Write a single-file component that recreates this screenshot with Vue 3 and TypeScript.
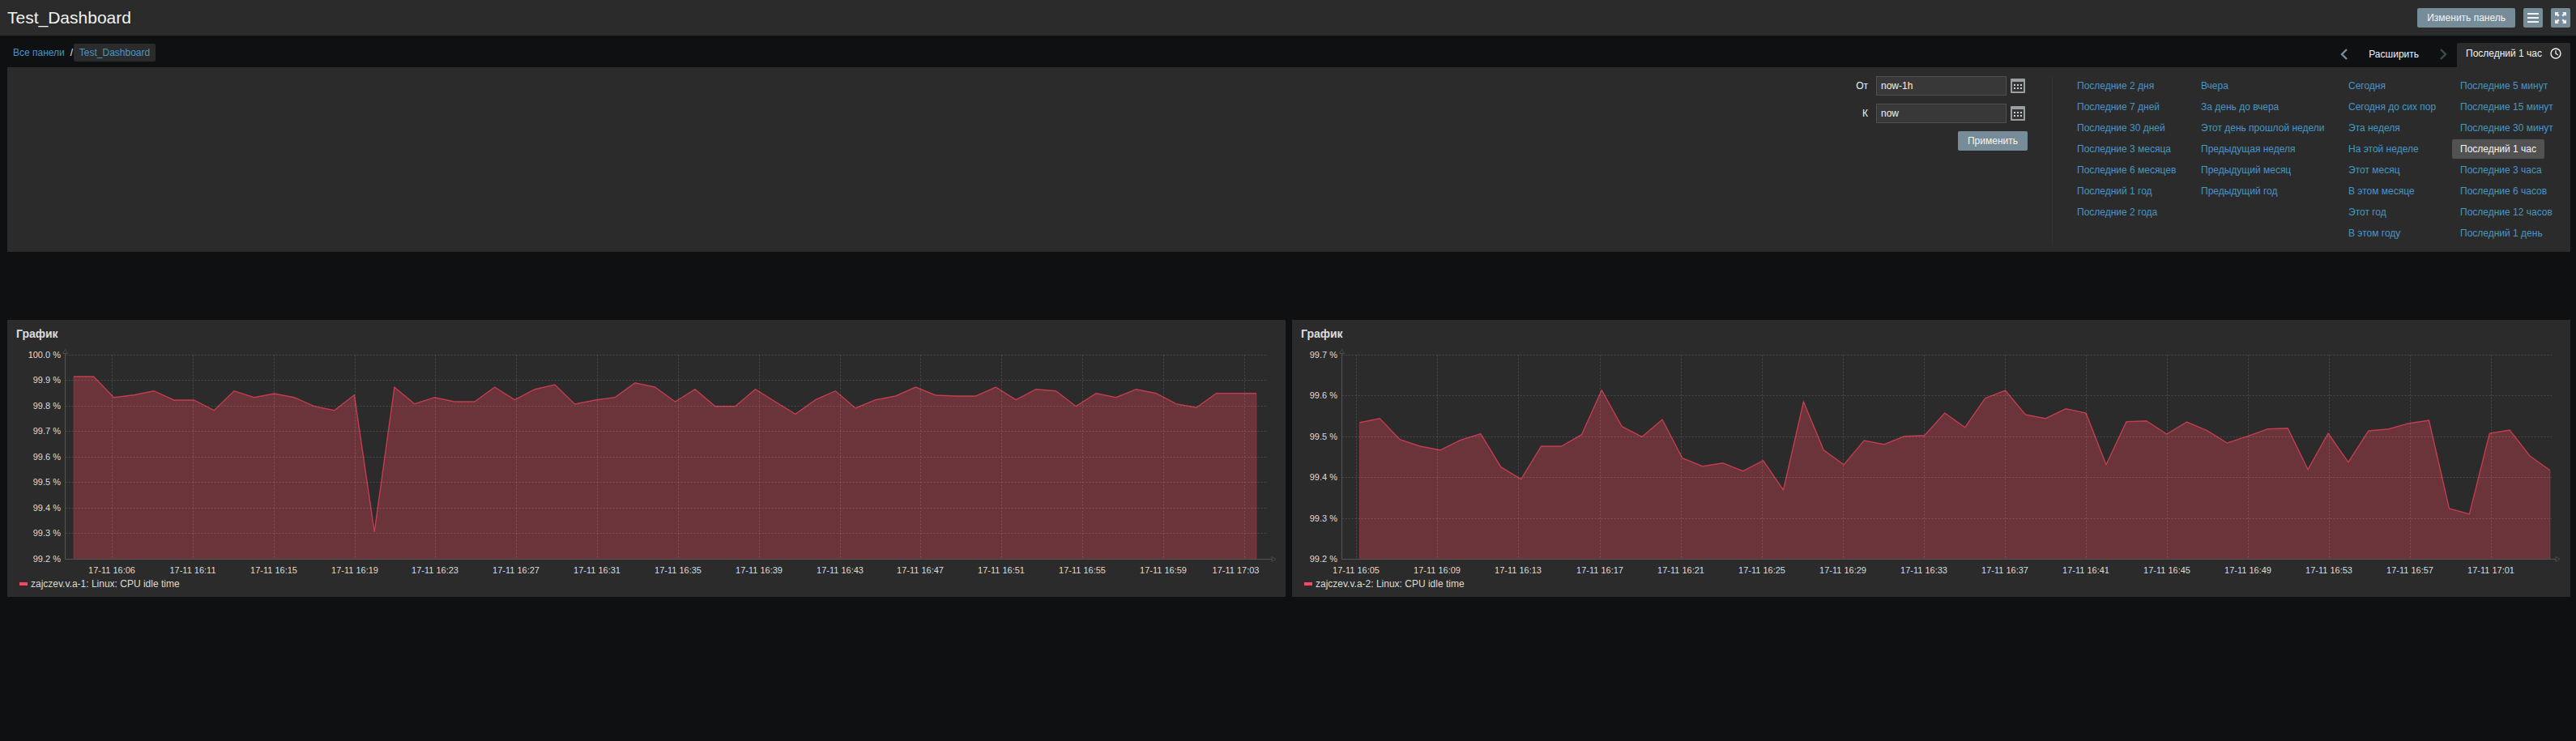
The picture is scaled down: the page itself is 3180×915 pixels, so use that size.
<script setup lang="ts">
interface Tick {
  x: number;
  label: string;
  labelX?: number;
}

interface Chart {
  left: number;
  axisX: number;
  gridEnd: number;
  firstX: number;
  lastX: number;
  legend: string;
  yLabels: string[];
  ticks: Tick[];
  values: number[];
}

const plotTop = 438.5;
const plotBottom = 690.5;
const svgTop = 428;
const svgHeight = 284;
const panelWidth = 1578;

function makeTicks(xs: number[], labels: string[]): Tick[] {
  return xs.map((x, index) => ({ x, label: `17-11 ${labels[index]}` }));
}

const charts: Chart[] = [
  {
    left: 9,
    axisX: 80.5,
    gridEnd: 1565,
    firstX: 91,
    lastX: 1551,
    legend: 'zajczev.v.a-1: Linux: CPU idle time',
    yLabels: ['100.0 %', '99.9 %', '99.8 %', '99.7 %', '99.6 %', '99.5 %', '99.4 %', '99.3 %', '99.2 %'],
    ticks: makeTicks(
      [138.5, 238.5, 338.5, 438.5, 537.5, 637.5, 737.5, 837.5, 937.5, 1037.5, 1136.5, 1236.5, 1336.5, 1436.5, 1536.5],
      ['16:06', '16:11', '16:15', '16:19', '16:23', '16:27', '16:31', '16:35', '16:39', '16:43', '16:47', '16:51', '16:55', '16:59', '17:03'],
    ).map((tick) => (tick.label.endsWith('17:03') ? { ...tick, labelX: 1526 } : tick)),
    values: [
      465, 465, 490.7, 487.7, 482.7, 494, 494, 506.7, 482.7, 490.7,
      486, 490.7, 501.7, 506.7, 487.7, 656.7, 478, 498.7, 490.7, 496,
      496, 478, 493.7, 480.7, 475, 499, 494, 490.7, 472.7, 478,
      496, 480.7, 501.7, 501.7, 480.7, 496, 511.3, 493.7, 482.7, 504,
      493.7, 489, 478, 488, 489, 489, 478, 493.7, 480.7, 482.7,
      501.7, 485.7, 490.7, 480.7, 485.7, 498.7, 503.3, 485.7, 485.7, 485.7,
    ],
  },
  {
    left: 1595,
    axisX: 1656.5,
    gridEnd: 3150,
    firstX: 1678.4,
    lastX: 3148,
    legend: 'zajczev.v.a-2: Linux: CPU idle time',
    yLabels: ['99.7 %', '99.6 %', '99.5 %', '99.4 %', '99.3 %', '99.2 %'],
    ticks: makeTicks(
      [1674.5, 1774.5, 1874.5, 1975.5, 2075.5, 2175.5, 2275.5, 2375.5, 2475.5, 2575.5, 2675.5, 2775.5, 2875.5, 2975.5, 3075.5],
      ['16:05', '16:09', '16:13', '16:17', '16:21', '16:25', '16:29', '16:33', '16:37', '16:41', '16:45', '16:49', '16:53', '16:57', '17:01'],
    ),
    values: [
      521.7, 516.7, 542.7, 551, 555.7, 543.3, 535.7, 576.7, 591.7, 551,
      551, 536.7, 481.7, 526.7, 539.3, 518, 565.7, 575.7, 571.7, 581.7,
      568.7, 605, 496, 555.7, 573.7, 544, 548.7, 538.7, 537.7, 510,
      527.7, 491.7, 482, 512, 516.7, 504.7, 510, 573.7, 520.7, 519.7,
      536, 521, 531.7, 547, 538.7, 529.7, 528.7, 579.7, 535, 570.7,
      532, 529.7, 522.7, 519, 628, 634.7, 535, 531, 563, 580.7,
    ],
  },
];

function localX(chart: Chart, x: number): number {
  return x - chart.left;
}

function localY(y: number): number {
  return y - svgTop;
}

// snapped to a pixel row so the dashed lines stay crisp
function gridY(chart: Chart, index: number): number {
  const step = (plotBottom - plotTop) / (chart.yLabels.length - 1);
  return localY(Math.round(plotTop - 0.5 + step * index - 0.1) + 0.5);
}

function linePoints(chart: Chart): string {
  const step = (chart.lastX - chart.firstX) / (chart.values.length - 1);
  return chart.values
    .map((value, index) => `${localX(chart, chart.firstX + step * index).toFixed(1)},${localY(value)}`)
    .join(' ');
}

function areaPoints(chart: Chart): string {
  const bottom = localY(plotBottom);
  return `${localX(chart, chart.firstX)},${bottom} ${linePoints(chart)} ${localX(chart, chart.lastX)},${bottom}`;
}

const rangeColumns = [
  {
    width: 153,
    items: ['Последние 2 дня', 'Последние 7 дней', 'Последние 30 дней', 'Последние 3 месяца', 'Последние 6 месяцев', 'Последний 1 год', 'Последние 2 года'],
  },
  {
    width: 182,
    items: ['Вчера', 'За день до вчера', 'Этот день прошлой недели', 'Предыдущая неделя', 'Предыдущий месяц', 'Предыдущий год'],
  },
  {
    width: 138,
    items: ['Сегодня', 'Сегодня до сих пор', 'Эта неделя', 'На этой неделе', 'Этот месяц', 'В этом месяце', 'Этот год', 'В этом году'],
  },
  {
    width: 146,
    items: ['Последние 5 минут', 'Последние 15 минут', 'Последние 30 минут', 'Последний 1 час', 'Последние 3 часа', 'Последние 6 часов', 'Последние 12 часов', 'Последний 1 день'],
  },
];

const activeRange = 'Последний 1 час';
</script>

<template>
  <div class="page">
    <header class="header">
      <h1 class="title">Test_Dashboard</h1>
      <div class="header-actions">
        <button class="btn">Изменить панель</button>
        <button class="btn btn-icon" aria-label="menu">
          <svg width="14" height="12" viewBox="0 0 14 12">
            <rect x="0" y="0" width="14" height="2" fill="#f2f2f2" />
            <rect x="0" y="5" width="14" height="2" fill="#f2f2f2" />
            <rect x="0" y="10" width="14" height="2" fill="#f2f2f2" />
          </svg>
        </button>
        <button class="btn btn-icon btn-full" aria-label="fullscreen">
          <svg width="14" height="14" viewBox="0 0 14 14" fill="#f2f2f2">
            <path d="M0 0h5L3.4 1.6 5.6 3.8 3.8 5.6 1.6 3.4 0 5z" />
            <path d="M14 0v5l-1.6-1.6-2.2 2.2-1.8-1.8 2.2-2.2L9 0z" />
            <path d="M0 14V9l1.6 1.6 2.2-2.2 1.8 1.8-2.2 2.2L5 14z" />
            <path d="M14 14H9l1.6-1.6-2.2-2.2 1.8-1.8 2.2 2.2L14 9z" />
          </svg>
        </button>
      </div>
    </header>

    <div class="toolbar">
      <nav class="crumbs">
        <a class="crumb">Все панели</a>
        <span class="crumb-sep">/</span>
        <a class="crumb crumb-current">Test_Dashboard</a>
      </nav>
      <div class="time-nav">
        <svg class="chevron" width="24" height="16" viewBox="0 0 24 16">
          <path d="M15 2 9 8l6 6" fill="none" stroke="#768d99" stroke-width="2.4" />
        </svg>
        <span class="zoom-out">Расширить</span>
        <svg class="chevron" width="24" height="16" viewBox="0 0 24 16">
          <path d="M9 2l6 6-6 6" fill="none" stroke="#3f4c54" stroke-width="2.4" />
        </svg>
        <div class="time-tab">
          <span>Последний 1 час</span>
          <svg width="14" height="14" viewBox="0 0 14 14">
            <circle cx="7" cy="7" r="6" fill="none" stroke="#f2f2f2" stroke-width="1.4" />
            <path d="M7 3.2V7l2.8 2" fill="none" stroke="#f2f2f2" stroke-width="1.3" />
          </svg>
        </div>
      </div>
    </div>

    <section class="filter">
      <form class="range-form" @submit.prevent>
        <label class="field-label">От</label>
        <input class="field" value="now-1h" readonly />
        <svg class="calendar" width="18" height="18" viewBox="0 0 18 18">
          <rect width="18" height="18" rx="1" fill="#98a0a3" />
          <rect x="2" y="4" width="14" height="12" fill="#353535" />
          <g fill="#d0d3d4">
            <rect x="4" y="7" width="2" height="2" /><rect x="8" y="7" width="2" height="2" /><rect x="12" y="7" width="2" height="2" />
            <rect x="4" y="11" width="2" height="2" /><rect x="8" y="11" width="2" height="2" /><rect x="12" y="11" width="2" height="2" />
          </g>
        </svg>
        <label class="field-label">К</label>
        <input class="field" value="now" readonly />
        <svg class="calendar" width="18" height="18" viewBox="0 0 18 18">
          <rect width="18" height="18" rx="1" fill="#98a0a3" />
          <rect x="2" y="4" width="14" height="12" fill="#353535" />
          <g fill="#d0d3d4">
            <rect x="4" y="7" width="2" height="2" /><rect x="8" y="7" width="2" height="2" /><rect x="12" y="7" width="2" height="2" />
            <rect x="4" y="11" width="2" height="2" /><rect x="8" y="11" width="2" height="2" /><rect x="12" y="11" width="2" height="2" />
          </g>
        </svg>
        <button class="btn btn-apply">Применить</button>
      </form>
      <div class="ranges">
        <ul
          v-for="column in rangeColumns"
          :key="column.items[0]"
          class="range-col"
          :style="{ width: `${column.width}px` }"
        >
          <li v-for="item in column.items" :key="item">
            <a class="range-link" :class="{ 'range-active': item === activeRange }">{{ item }}</a>
          </li>
        </ul>
      </div>
    </section>

    <main class="charts">
      <article v-for="chart in charts" :key="chart.legend" class="panel">
        <h2 class="panel-title">График</h2>
        <svg class="plot" :width="panelWidth" :height="svgHeight">
          <polygon :points="areaPoints(chart)" class="area" />
          <polyline :points="linePoints(chart)" class="line" />

          <g v-for="(label, index) in chart.yLabels" :key="label">
            <line
              :x1="localX(chart, chart.axisX)"
              :x2="localX(chart, chart.gridEnd)"
              :y1="gridY(chart, index)"
              :y2="gridY(chart, index)"
              class="grid"
            />
            <text
              :x="localX(chart, chart.axisX) - 5.5"
              :y="gridY(chart, index) + 3"
              text-anchor="end"
              class="tick"
            >{{ label }}</text>
          </g>

          <g v-for="tick in chart.ticks" :key="tick.label">
            <line
              :x1="localX(chart, tick.x)"
              :x2="localX(chart, tick.x)"
              :y1="localY(plotTop)"
              :y2="localY(plotBottom)"
              class="grid"
            />
            <text
              :x="localX(chart, tick.labelX ?? tick.x) - 0.5"
              :y="localY(708)"
              text-anchor="middle"
              class="tick"
            >{{ tick.label }}</text>
          </g>

          <line
            :x1="localX(chart, chart.axisX)"
            :x2="localX(chart, chart.axisX)"
            :y1="localY(437)"
            :y2="localY(plotBottom)"
            class="axis"
          />
          <line
            :x1="localX(chart, chart.axisX)"
            :x2="localX(chart, chart.gridEnd + 5)"
            :y1="localY(plotBottom)"
            :y2="localY(plotBottom)"
            class="axis"
          />
          <polygon
            :points="`${localX(chart, chart.axisX) - 3},${localY(436.5)} ${localX(chart, chart.axisX)},${localY(431.5)} ${localX(chart, chart.axisX) + 3},${localY(436.5)}`"
            class="arrow"
          />
          <polygon
            :points="`${localX(chart, chart.gridEnd + 5)},${localY(plotBottom - 3)} ${localX(chart, chart.gridEnd + 10)},${localY(plotBottom)} ${localX(chart, chart.gridEnd + 5)},${localY(plotBottom + 3)}`"
            class="arrow"
          />
        </svg>
        <div class="legend">
          <span class="swatch"></span>
          <span>{{ chart.legend }}</span>
        </div>
      </article>
    </main>
  </div>
</template>

<style>
html,
body {
  background: #0e1012;
}
</style>

<style scoped>
.page {
  min-height: 915px;
  background: #0e1012;
  color: #f2f2f2;
  font-family: "Liberation Sans", Arial, sans-serif;
  font-size: 12px;
}

.header {
  display: flex;
  align-items: center;
  justify-content: space-between;
  height: 44px;
  padding: 0 7px 0 9px;
  background: #2b2b2b;
  box-sizing: border-box;
}

.title {
  margin: 0;
  font-size: 21px;
  font-weight: 400;
  line-height: 44px;
}

.header-actions {
  display: flex;
  gap: 10px;
}

.btn {
  height: 24px;
  padding: 0 12px;
  border: 0;
  border-radius: 2px;
  background: #768d99;
  color: #f2f2f2;
  font-family: inherit;
  font-size: 12px;
  line-height: 24px;
}

.btn-icon {
  display: flex;
  align-items: center;
  justify-content: center;
  width: 24px;
  padding: 0;
}

.toolbar {
  display: flex;
  justify-content: space-between;
  height: 39px;
  padding: 0 7px 0 9px;
}

.crumbs {
  display: flex;
  align-items: center;
  height: 22px;
  margin-top: 10px;
}

.crumb {
  padding: 0 7px;
  color: #4796c4;
  line-height: 22px;
}

.crumb-sep {
  width: 4px;
  color: #f2f2f2;
}

.crumb-current {
  border-radius: 2px;
  background: #2b2b2b;
}

.time-nav {
  display: flex;
  align-items: flex-start;
  padding-top: 9px;
}

.chevron {
  margin-top: 6px;
}

.zoom-out {
  margin: 5px 18px 0;
  line-height: 18px;
}

.time-tab {
  display: flex;
  gap: 10px;
  width: 140px;
  height: 30px;
  margin-left: 5px;
  padding: 4px 11px 0;
  box-sizing: border-box;
  border-radius: 2px 2px 0 0;
  background: #2b2b2b;
  line-height: 18px;
}

.time-tab svg {
  margin-top: 2px;
}

.filter {
  display: flex;
  justify-content: flex-end;
  margin: 0 7px 84px 9px;
  padding: 11px 0 9px;
  background: #2b2b2b;
}

.range-form {
  display: grid;
  grid-template-columns: auto 161px 26px;
  grid-auto-rows: 24px;
  gap: 10px;
  column-gap: 0;
  align-content: start;
  align-items: center;
  margin-right: 30px;
}

.field-label {
  margin-right: 10px;
  text-align: right;
}

.field {
  box-sizing: border-box;
  width: 161px;
  height: 24px;
  padding: 0 5px;
  border: 1px solid #4f4f4f;
  border-radius: 0;
  outline: 0;
  background: #383838;
  color: #f2f2f2;
  font-family: inherit;
  font-size: 12px;
}

.calendar {
  margin-left: 5px;
}

.btn-apply {
  grid-column: 1 / -1;
  justify-self: end;
  width: 86px;
  padding: 0;
}

.ranges {
  display: flex;
  padding-left: 20px;
  border-left: 1px solid #333;
}

.range-col {
  margin: 0;
  padding: 0;
  list-style: none;
}

.range-col li {
  height: 26px;
}

.range-link {
  display: inline-block;
  padding: 0 10px;
  border-radius: 2px;
  color: #4796c4;
  line-height: 24px;
  white-space: nowrap;
}

.range-active {
  background: #525252;
  color: #f2f2f2;
}

.charts {
  display: grid;
  grid-template-columns: 1fr 1fr;
  gap: 8px;
  padding: 0 7px 0 9px;
}

.panel {
  height: 342px;
  background: #2b2b2b;
}

.panel-title {
  height: 33px;
  margin: 0;
  padding-left: 11px;
  color: #dcdcdc;
  font-size: 14px;
  font-weight: 700;
  line-height: 34px;
}

.plot {
  display: block;
}

.area {
  fill: rgba(255, 70, 92, 0.3);
  stroke: rgba(255, 70, 92, 0.3);
  stroke-width: 1;
}

.line {
  fill: none;
  stroke: rgba(255, 70, 92, 0.55);
  stroke-width: 1.4;
}

.grid {
  stroke: rgba(255, 255, 255, 0.15);
  stroke-width: 1;
  stroke-dasharray: 2 2;
}

.axis {
  stroke: #555;
  stroke-width: 1;
}

.arrow {
  fill: none;
  stroke: #4a4a4a;
  stroke-width: 1;
}

.tick {
  fill: #dcdcdc;
  font-size: 11px;
}

.legend {
  display: flex;
  align-items: center;
  gap: 4px;
  height: 18px;
  padding-left: 15px;
  color: #dcdcdc;
}

.swatch {
  width: 10px;
  height: 4px;
  background: #ff465c;
}
</style>
